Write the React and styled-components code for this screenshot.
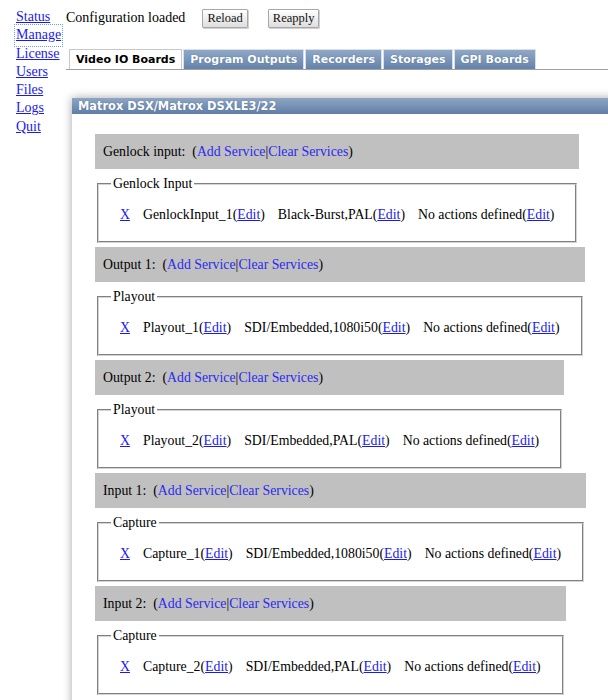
import React from "react";
import styled, { createGlobalStyle } from "styled-components";

const GlobalStyle = createGlobalStyle`
  html, body {
    margin: 0;
    padding: 0;
    background: #fff;
    overflow: hidden;
  }
  body {
    font-family: "Liberation Serif", "Times New Roman", serif;
    font-size: 13.8px;
    color: #000;
  }
`;

const Page = styled.div`
  display: flex;
  align-items: flex-start;
  padding: 8px 0 0 16px;
  min-height: 692px;
`;

const Nav = styled.nav`
  display: flex;
  flex-direction: column;
  width: 50px;
  font-size: 14px;
  line-height: 18.3px;
`;

const NavLink = styled.a`
  color: #1a1aee;
  text-decoration: underline;
  align-self: flex-start;
  outline: ${(p) => (p.$focused ? "1px dotted #6aa0e8" : "none")};
  outline-offset: 1px;
`;

const Main = styled.div`
  flex: 1;
  display: flex;
  flex-direction: column;
  min-width: 0;
`;

const TopBar = styled.div`
  display: flex;
  align-items: center;
  height: 20px;
  gap: 17px;
`;

const Status = styled.span`
  font-size: 14px;
  line-height: 18px;
`;

const Buttons = styled.div`
  display: flex;
  gap: 20px;
`;

const Button = styled.button`
  font-family: "Liberation Serif", "Times New Roman", serif;
  font-size: 12.5px;
  height: 19px;
  padding: 0 4px;
  color: #111;
  background: linear-gradient(#ffffff, #dedede);
  border: 1px solid #a8a8a8;
  box-shadow: 1px 1px 0 #d0d0d0;
  border-radius: 1px;
`;

const TabBar = styled.div`
  display: flex;
  gap: 1px;
  margin-top: 21px;
  padding-left: 3px;
  border-bottom: 1px solid #a0a0a0;
`;

const Tab = styled.div`
  font-family: "DejaVu Sans", Verdana, sans-serif;
  font-weight: bold;
  font-size: 11px;
  height: 20px;
  line-height: 19px;
  padding: 0 6px;
  box-sizing: border-box;
  border: 1px solid ${(p) => (p.$active ? "#c8c8c8" : "#d8dfe8")};
  border-bottom: none;
  color: ${(p) => (p.$active ? "#000" : "#fff")};
  background: ${(p) =>
    p.$active ? "#fff" : "linear-gradient(#90a8c7, #6483ab)"};
  text-shadow: ${(p) => (p.$active ? "none" : "0 0 1px rgba(40,60,90,0.6)")};
`;

const Panel = styled.section`
  margin: 28px -30px 0 6px;
  background: #fff;
  box-shadow: 0 0 9px rgba(0, 0, 0, 0.35);
  min-height: 640px;
`;

const PanelTitle = styled.div`
  height: 16px;
  line-height: 16px;
  padding-left: 6px;
  font-family: "DejaVu Sans", Verdana, sans-serif;
  font-weight: bold;
  font-size: 11.4px;
  color: #fff;
  background: linear-gradient(#8ea6c4, #5f7ea6);
  text-shadow: 0 0 1px rgba(30, 50, 80, 0.5);
`;

const PanelBody = styled.div`
  display: flex;
  flex-direction: column;
  align-items: flex-start;
  padding: 20px 0 0 23px;
`;

const Group = styled.div`
  display: flex;
  flex-direction: column;
`;

const GroupHeader = styled.div`
  height: 35px;
  line-height: 35px;
  padding: 0 8px;
  background: #c0c0c0;
  white-space: nowrap;
`;

const PlainLink = styled.a`
  color: #2a2af0;
  text-decoration: none;
`;

const Fieldset = styled.fieldset`
  margin: 6px 2px 4px;
  padding: 5px 12px 10px;
  border: 2px groove #d4d4d4;
  min-width: 0;
`;

const Legend = styled.legend`
  padding: 0 2px;
  line-height: 18px;
`;

const ServiceRow = styled.div`
  display: flex;
  gap: 13px;
  padding: 8px 9px 7px;
  line-height: 18px;
  white-space: nowrap;
`;

const RowLink = styled.a`
  color: #1a1aee;
  text-decoration: underline;
`;

const navItems = ["Status", "Manage", "License", "Users", "Files", "Logs", "Quit"];
const tabs = ["Video IO Boards", "Program Outputs", "Recorders", "Storages", "GPI Boards"];

const groups = [
  { label: "Genlock input:", legend: "Genlock Input", name: "GenlockInput_1", format: "Black-Burst,PAL" },
  { label: "Output 1:", legend: "Playout", name: "Playout_1", format: "SDI/Embedded,1080i50" },
  { label: "Output 2:", legend: "Playout", name: "Playout_2", format: "SDI/Embedded,PAL" },
  { label: "Input 1:", legend: "Capture", name: "Capture_1", format: "SDI/Embedded,1080i50" },
  { label: "Input 2:", legend: "Capture", name: "Capture_2", format: "SDI/Embedded,PAL" },
];

const Edit = () => (
  <>
    (<RowLink href="#">Edit</RowLink>)
  </>
);

const App = () => {
  return (
    <>
      <GlobalStyle />
      <Page>
        <Nav>
          {navItems.map((item) => (
            <NavLink key={item} href="#" $focused={item === "Manage"}>
              {item}
            </NavLink>
          ))}
        </Nav>
        <Main>
          <TopBar>
            <Status>Configuration loaded</Status>
            <Buttons>
              <Button>Reload</Button>
              <Button>Reapply</Button>
            </Buttons>
          </TopBar>
          <TabBar>
            {tabs.map((tab, i) => (
              <Tab key={tab} $active={i === 0}>
                {tab}
              </Tab>
            ))}
          </TabBar>
          <Panel>
            <PanelTitle>Matrox DSX/Matrox DSXLE3/22</PanelTitle>
            <PanelBody>
              {groups.map((g) => (
                <Group key={g.name}>
                  <GroupHeader>
                    {g.label}&nbsp;&nbsp;(<PlainLink href="#">Add Service</PlainLink>|
                    <PlainLink href="#">Clear Services</PlainLink>)
                  </GroupHeader>
                  <Fieldset>
                    <Legend>{g.legend}</Legend>
                    <ServiceRow>
                      <RowLink href="#">X</RowLink>
                      <span>
                        {g.name}
                        <Edit />
                      </span>
                      <span>
                        {g.format}
                        <Edit />
                      </span>
                      <span>
                        No actions defined
                        <Edit />
                      </span>
                    </ServiceRow>
                  </Fieldset>
                </Group>
              ))}
            </PanelBody>
          </Panel>
        </Main>
      </Page>
    </>
  );
};

export default App;
